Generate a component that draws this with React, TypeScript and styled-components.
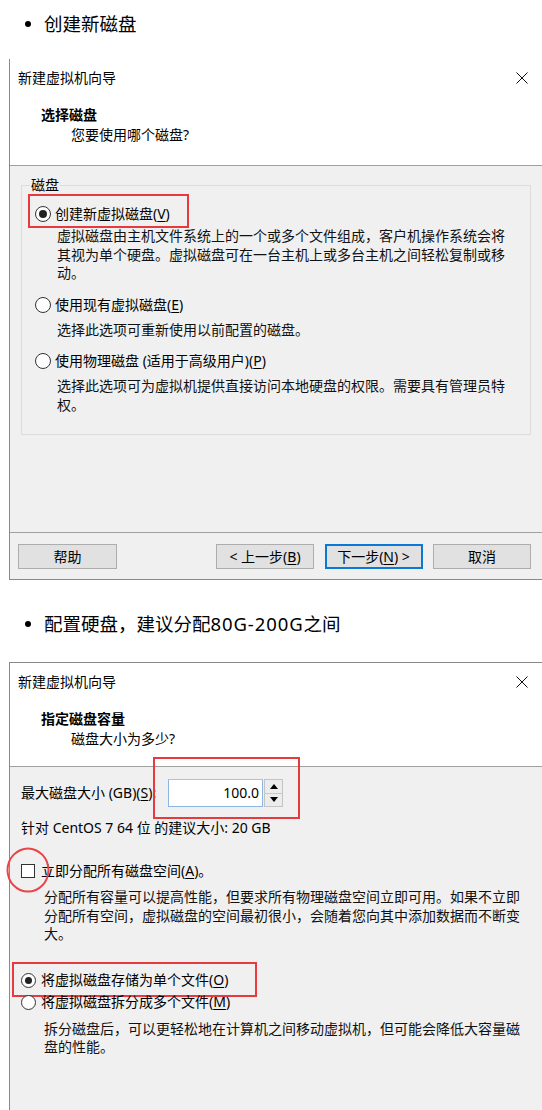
import React from "react";
import styled, { createGlobalStyle } from "styled-components";

const GlobalStyle = createGlobalStyle`
  *, *::before, *::after { box-sizing: border-box; }
  html, body { margin: 0; padding: 0; background: #ffffff; }
  body {
    font-family: "Noto Sans", "Noto Sans CJK SC", sans-serif;
    color: #000;
    overflow: hidden;
  }
`;

const Page = styled.div`
  width: 542px;
  height: 1110px;
  overflow: hidden;
  background: #fff;
  display: flex;
  flex-direction: column;
`;

const BulletHeading = styled.div<{ $mt: number; $mb: number }>`
  display: flex;
  align-items: center;
  gap: 13px;
  margin: ${(p) => p.$mt}px 0 ${(p) => p.$mb}px 25px;
  height: 28px;
  font-size: 18.5px;
  line-height: 28px;
  color: #000;
  flex: none;
  &::before {
    content: "";
    flex: none;
    width: 6px;
    height: 6px;
    border-radius: 50%;
    background: #000;
  }
`;

const Latin = styled.span`
  letter-spacing: 0.9px;
`;

const Dialog = styled.section<{ $topBorder?: boolean; $bottomBorder?: boolean; $fill?: boolean }>`
  margin-left: 9px;
  width: 536px;
  flex: ${(p) => (p.$fill ? "1" : "none")};
  display: flex;
  flex-direction: column;
  background: #f0f0f0;
  border-left: 1px solid #8a8a8a;
  border-top: ${(p) => (p.$topBorder ? "1px solid #8a8a8a" : "none")};
  border-bottom: ${(p) => (p.$bottomBorder ? "1px solid #8a8a8a" : "none")};
  font-size: 14px;
  line-height: 20px;
  color: #000;
`;

const TitleBar = styled.header`
  height: 38px;
  flex: none;
  display: flex;
  align-items: center;
  justify-content: space-between;
  padding-left: 8px;
  background: #fff;
`;

const CloseButton = styled.span`
  width: 46px;
  height: 38px;
  display: flex;
  align-items: center;
  justify-content: center;
`;

const Header = styled.div<{ $h: number }>`
  height: ${(p) => p.$h}px;
  flex: none;
  background: #fff;
  border-bottom: 1px solid #a0a0a0;
  padding: 9px 0 0 31px;
  line-height: 18px;
`;

const HeaderTitle = styled.div`
  font-weight: 700;
`;

const HeaderSub = styled.div`
  margin: 2px 0 0 30px;
`;

const Body = styled.div<{ $h?: number; $pad: string }>`
  ${(p) => (p.$h ? `height: ${p.$h}px; flex: none;` : "flex: 1;")}
  padding: ${(p) => p.$pad};
`;

const GroupBox = styled.div`
  position: relative;
  height: 250px;
  border: 1px solid #dcdcdc;
  padding: 17px 0 0 13px;
`;

const GroupLabel = styled.span`
  position: absolute;
  top: -10px;
  left: 8px;
  padding: 0 1px;
  line-height: 18px;
  background: #f0f0f0;
`;

const Option = styled.div<{ $mt?: number }>`
  margin-top: ${(p) => p.$mt ?? 0}px;
`;

const ChoiceRow = styled.label`
  position: relative;
  display: inline-flex;
  align-items: center;
  height: 20px;
  line-height: 20px;
  white-space: nowrap;
`;

const Radio = styled.span<{ $checked?: boolean; $size: number }>`
  flex: none;
  width: ${(p) => p.$size}px;
  height: ${(p) => p.$size}px;
  margin-right: ${(p) => 20 - p.$size}px;
  border-radius: 50%;
  border: 1px solid #333;
  background: #fff;
  display: flex;
  align-items: center;
  justify-content: center;
  &::after {
    content: "";
    display: ${(p) => (p.$checked ? "block" : "none")};
    width: ${(p) => p.$size - 8}px;
    height: ${(p) => p.$size - 8}px;
    border-radius: 50%;
    background: #222;
  }
`;

const CheckBox = styled.span`
  position: relative;
  flex: none;
  width: 14px;
  height: 14px;
  margin-right: 6px;
  border: 1px solid #333;
  background: #fff;
`;

const RedCircle = styled.span`
  position: absolute;
  left: 50%;
  top: 50%;
  width: 43px;
  height: 45px;
  transform: translate(-50%, -52%);
  border: 2px solid #e8454a;
  border-radius: 50%;
  pointer-events: none;
`;

const RedBox = styled.span<{ $t: number; $l: number; $w: number; $h: number }>`
  position: absolute;
  top: ${(p) => p.$t}px;
  left: ${(p) => p.$l}px;
  width: ${(p) => p.$w}px;
  height: ${(p) => p.$h}px;
  border: 2px solid #e8393f;
  pointer-events: none;
`;

const Mn = styled.span`
  text-decoration: underline;
  text-underline-offset: 2px;
`;

const Desc = styled.p<{ $indent: number; $w: number; $mt: number }>`
  margin: ${(p) => p.$mt}px 0 0 ${(p) => p.$indent}px;
  width: ${(p) => p.$w}px;
  line-height: 18.5px;
  color: #111;
`;

const ButtonBar = styled.div`
  flex: none;
  height: 47px;
  border-top: 1px solid #a0a0a0;
  display: flex;
  align-items: flex-start;
  padding: 11px 14px 0 8px;
`;

const ButtonGroup = styled.div`
  margin-left: auto;
  display: flex;
  gap: 10.5px;
`;

const Button = styled.button<{ $primary?: boolean; $w: number }>`
  width: ${(p) => p.$w}px;
  height: 25px;
  padding: 0;
  background: #e1e1e1;
  border: ${(p) => (p.$primary ? "2px solid #0a78d4" : "1px solid #adadad")};
  font: inherit;
  font-size: 14px;
  line-height: 20px;
  color: #000;
  display: flex;
  align-items: center;
  justify-content: center;
`;

const SizeRow = styled.div`
  display: flex;
  align-items: center;
  height: 28px;
`;

const SizeLabel = styled.span`
  width: 147px;
  flex: none;
  white-space: nowrap;
`;

const SpinBox = styled.div`
  position: relative;
  display: flex;
  gap: 1px;
  height: 28px;
`;

const NumberField = styled.div`
  width: 95px;
  height: 28px;
  background: #fff;
  border: 1px solid #8ab6e4;
  border-top-color: #a9c4e2;
  text-align: right;
  padding-right: 3px;
  line-height: 26px;
`;

const SpinButtons = styled.div`
  width: 19px;
  height: 28px;
  display: flex;
  flex-direction: column;
  border: 1px solid #c4c4c4;
  background: #e6e6e6;
`;

const SpinHalf = styled.span<{ $down?: boolean }>`
  flex: 1;
  display: flex;
  align-items: center;
  justify-content: center;
  border-top: ${(p) => (p.$down ? "1px solid #c9c9c9" : "none")};
  background: #ececec;
`;

const PlainLine = styled.div<{ $mt: number }>`
  margin-top: ${(p) => p.$mt}px;
  line-height: 18px;
`;

const Arrow = ({ down }: { down?: boolean }) => (
  <svg width="8" height="5" viewBox="0 0 8 5">
    {down ? <polygon points="0,0 8,0 4,5" fill="#000" /> : <polygon points="0,5 8,5 4,0" fill="#000" />}
  </svg>
);

const CloseIcon = () => (
  <svg width="12" height="12" viewBox="0 0 12 12">
    <line x1="0.5" y1="0.5" x2="11.5" y2="11.5" stroke="#111" strokeWidth="1" />
    <line x1="11.5" y1="0.5" x2="0.5" y2="11.5" stroke="#111" strokeWidth="1" />
  </svg>
);

export default function App() {
  return (
    <>
      <GlobalStyle />
      <Page>
        <BulletHeading $mt={10} $mb={21}>创建新磁盘</BulletHeading>

        <Dialog $bottomBorder>
          <TitleBar>
            <span>新建虚拟机向导</span>
            <CloseButton>
              <CloseIcon />
            </CloseButton>
          </TitleBar>
          <Header $h={69}>
            <HeaderTitle>选择磁盘</HeaderTitle>
            <HeaderSub>您要使用哪个磁盘?</HeaderSub>
          </Header>
          <Body $h={366} $pad="19px 14px 0 11px">
            <GroupBox>
              <GroupLabel>磁盘</GroupLabel>
              <Option>
                <ChoiceRow>
                  <Radio $checked $size={16} />
                  创建新虚拟磁盘(<Mn>V</Mn>)
                  <RedBox $t={-10} $l={-7} $w={161} $h={34} />
                </ChoiceRow>
                <Desc $indent={22} $w={455} $mt={3}>
                  虚拟磁盘由主机文件系统上的一个或多个文件组成，客户机操作系统会将其视为单个硬盘。虚拟磁盘可在一台主机上或多台主机之间轻松复制或移动。
                </Desc>
              </Option>
              <Option $mt={12}>
                <ChoiceRow>
                  <Radio $size={16} />
                  使用现有虚拟磁盘(<Mn>E</Mn>)
                </ChoiceRow>
                <Desc $indent={22} $w={455} $mt={3}>
                  选择此选项可重新使用以前配置的磁盘。
                </Desc>
              </Option>
              <Option $mt={12}>
                <ChoiceRow>
                  <Radio $size={16} />
                  使用物理磁盘 (适用于高级用户)(<Mn>P</Mn>)
                </ChoiceRow>
                <Desc $indent={22} $w={455} $mt={3}>
                  选择此选项可为虚拟机提供直接访问本地硬盘的权限。需要具有管理员特权。
                </Desc>
              </Option>
            </GroupBox>
          </Body>
          <ButtonBar>
            <Button $w={99}>帮助</Button>
            <ButtonGroup>
              <Button $w={98}>&lt; 上一步(<Mn>B</Mn>)</Button>
              <Button $w={98} $primary>
                下一步(<Mn>N</Mn>) &gt;
              </Button>
              <Button $w={98}>取消</Button>
            </ButtonGroup>
          </ButtonBar>
        </Dialog>

        <BulletHeading $mt={30} $mb={24}>
          <span>
            配置硬盘，建议分配<Latin>80G-200G</Latin>之间
          </span>
        </BulletHeading>

        <Dialog $topBorder $fill>
          <TitleBar>
            <span>新建虚拟机向导</span>
            <CloseButton>
              <CloseIcon />
            </CloseButton>
          </TitleBar>
          <Header $h={66}>
            <HeaderTitle>指定磁盘容量</HeaderTitle>
            <HeaderSub>磁盘大小为多少?</HeaderSub>
          </Header>
          <Body $pad="12px 0 0 11px">
            <SizeRow>
              <SizeLabel>
                最大磁盘大小 (GB)(<Mn>S</Mn>):
              </SizeLabel>
              <SpinBox>
                <NumberField>100.0</NumberField>
                <SpinButtons>
                  <SpinHalf>
                    <Arrow />
                  </SpinHalf>
                  <SpinHalf $down>
                    <Arrow down />
                  </SpinHalf>
                </SpinButtons>
                <RedBox $t={-22} $l={-15} $w={147} $h={62} />
              </SpinBox>
            </SizeRow>
            <PlainLine $mt={12}>针对 CentOS 7 64 位 的建议大小: 20 GB</PlainLine>

            <Option $mt={24}>
              <ChoiceRow>
                <CheckBox>
                  <RedCircle />
                </CheckBox>
                立即分配所有磁盘空间(<Mn>A</Mn>)。
              </ChoiceRow>
              <Desc $indent={23} $w={480} $mt={5}>
                分配所有容量可以提高性能，但要求所有物理磁盘空间立即可用。如果不立即分配所有空间，虚拟磁盘的空间最初很小，会随着您向其中添加数据而不断变大。
              </Desc>
            </Option>

            <Option $mt={25}>
              <ChoiceRow>
                <Radio $checked $size={15} />
                将虚拟磁盘存储为单个文件(<Mn>O</Mn>)
                <RedBox $t={-8} $l={-9} $w={245} $h={35} />
              </ChoiceRow>
            </Option>
            <Option $mt={2}>
              <ChoiceRow>
                <Radio $size={15} />
                将虚拟磁盘拆分成多个文件(<Mn>M</Mn>)
              </ChoiceRow>
              <Desc $indent={23} $w={480} $mt={5}>
                拆分磁盘后，可以更轻松地在计算机之间移动虚拟机，但可能会降低大容量磁盘的性能。
              </Desc>
            </Option>
          </Body>
        </Dialog>
      </Page>
    </>
  );
}
